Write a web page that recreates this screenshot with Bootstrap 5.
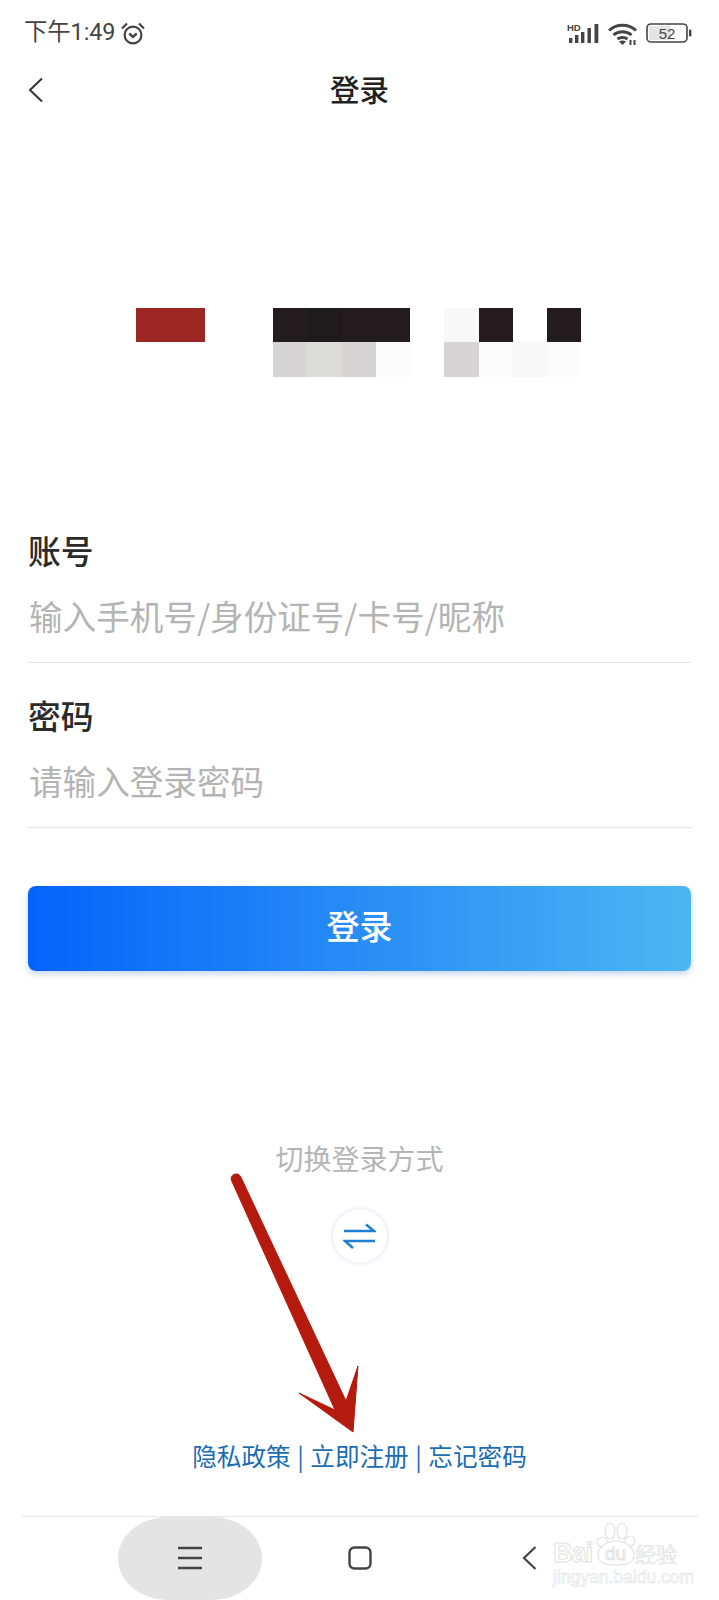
<!DOCTYPE html>
<html lang="zh-CN">
  <head>
    <meta charset="UTF-8" />
    <meta name="viewport" content="width=device-width, initial-scale=1" />
    <title>登录</title>
    <link
      href="https://cdn.jsdelivr.net/npm/bootstrap@5.3.2/dist/css/bootstrap.min.css"
      rel="stylesheet"
    />
    <style>
      body {
        font-family: "Noto Sans CJK SC", "Noto Sans", sans-serif;
        background: #fff;
      }
      .phone {
        width: 719px;
        height: 1600px;
        overflow: hidden;
        position: relative;
      }
      .status-row {
        height: 64px;
        padding: 2px 27px 0 24px;
        color: #444;
      }
      .status-time {
        font-family: Roboto, "Noto Sans CJK SC", sans-serif;
        font-size: 23.4px;
        line-height: 1;
        letter-spacing: -0.1px;
      }
      .status-left {
        gap: 6px;
      }
      .status-right {
        gap: 9px;
      }
      .title-row {
        height: 50px;
        position: relative;
      }
      .title-text {
        font-size: 29.5px;
        font-weight: 500;
        color: #222;
        line-height: 50px;
        position: relative;
        top: -1px;
      }
      .back-icon {
        position: absolute;
        left: 28px;
        top: 13px;
      }
      .logo-grid {
        display: grid;
        grid-template-columns: repeat(13, 34.25px);
        grid-auto-rows: 34.25px;
        margin: 194px 0 0 136px;
        width: max-content;
      }
      .px-red { background: #9c2722; }
      .px-black { background: #241b1e; }
      .px-black2 { background: #1d1b1b; }
      .px-dark { background: #261a1e; }
      .px-grey { background: #d6d4d5; }
      .px-grey2 { background: #dcdcdb; }
      .px-pale { background: #f9f8f9; }
      .px-faint { background: #fdfcfd; }
      .form-area {
        margin: 153px 28px 0;
      }
      .field-label {
        font-size: 32.8px;
        font-weight: 500;
        line-height: 44px;
        color: #2b2b2b;
        margin: 0;
        display: block;
        position: relative;
        top: -2px;
      }
      .field-input {
        height: 89px;
        font-size: 33.6px;
        padding: 0 0 4px 1px;
        border-width: 0 0 1px;
        border-color: #e2e2e2;
        border-radius: 0;
        color: #333;
      }
      .field-input::placeholder {
        color: #b4b4b4;
      }
      .login-btn {
        display: block;
        height: 85px;
        margin-top: 58px;
        padding: 0 0 4px;
        font-size: 33px;
        font-weight: 500;
        color: #fff;
        border: 0;
        border-radius: 8px;
        background: linear-gradient(90deg, #0563fa, #4cb6f1);
        box-shadow: 0 3px 6px rgba(60, 120, 200, 0.3);
      }
      .switch-text {
        margin-top: 167px;
        font-size: 28px;
        line-height: 40px;
        color: #b5b5b5;
      }
      .switch-btn {
        width: 54px;
        height: 54px;
        margin-top: 31px;
        border-radius: 50%;
        background: #fff;
        box-shadow: 0 0 4px rgba(120, 170, 225, 0.4);
      }
      .foot-links {
        margin-top: 175px;
        font-size: 24.6px;
        line-height: 36px;
        word-spacing: 1px;
        color: #1b6cb4;
        position: relative;
        top: -1px;
      }
      .foot-links a {
        color: inherit;
        text-decoration: none;
      }
      .bottom-nav {
        height: 84px;
        margin: 42px 21px 0;
        border-top: 1px solid #e6e6e6;
      }
      .nav-cell {
        width: 170px;
        height: 100%;
      }
      .nav-pill-bg {
        width: 144px;
        height: 100%;
        background: #e4e4e4;
        border-radius: 50px / 42px;
      }
      .red-arrow {
        position: absolute;
        left: 225px;
        top: 1165px;
      }
      .watermark {
        position: absolute;
        left: 553px;
        top: 1522px;
        width: 130px;
        color: #fff;
        -webkit-text-stroke: 1px #e2e2e2;
        font-family: "Liberation Sans", "Noto Sans CJK SC", sans-serif;
        line-height: 1;
      }
      .wm-logo {
        margin-top: 20px;
        height: 22px;
        white-space: nowrap;
      }
      .wm-bai {
        font-size: 27px;
        font-weight: 700;
        letter-spacing: -1px;
        width: 43px;
      }
      .wm-du {
        font-size: 19px;
        width: 39px;
        text-align: center;
        position: relative;
      }
      .wm-cn {
        font-family: "Noto Sans CJK SC", sans-serif;
        font-size: 21px;
        -webkit-text-stroke: 0.7px #e0e0e0;
      }
      .wm-url {
        font-size: 17.5px;
        margin-top: 5px;
        -webkit-text-stroke: 0.6px #e2e2e2;
        white-space: nowrap;
      }
      .wm-paw {
        position: absolute;
        left: 43px;
        top: 0;
      }
    </style>
  </head>
  <body>
    <div class="phone">
      <!-- status bar -->
      <div class="status-row d-flex justify-content-between align-items-center">
        <div class="status-left d-flex align-items-center">
          <span class="status-time">下午1:49</span>
          <svg width="24" height="23" viewBox="0 0 24 23" fill="none" stroke="#444" stroke-width="2.200">
            <circle cx="12" cy="13" r="8.400" />
            <path d="M8.200 11.500l3.800 3.400 3.800-3.400" stroke-width="2.400" />
            <path d="M1 6.500L6 1.500M23 6.500L18 1.500" stroke-width="2.200" />
          </svg>
        </div>
        <div class="status-right d-flex align-items-center">
          <svg width="32" height="21" viewBox="0 0 32 21">
            <text x="0" y="8" font-family="Liberation Sans" font-size="9.500" font-weight="700" fill="#444">HD</text>
            <g fill="#444">
              <rect x="2" y="15" width="3.400" height="5" />
              <rect x="8" y="12" width="3.400" height="8" />
              <rect x="14" y="9" width="3.400" height="11" />
              <rect x="20.500" y="5" width="3.400" height="15" />
              <rect x="27.500" y="1" width="3.800" height="19" />
            </g>
          </svg>
          <svg width="29" height="23" viewBox="0 0 29 23" fill="none" stroke="#444" stroke-width="3">
            <path d="M1 8.500C8 1.500 21 1.500 28 8.500" />
            <path d="M5.500 13c5-4.500 13-4.500 18 0" />
            <path d="M9.500 17c2.700-2 7.300-2 10 0" />
            <path d="M14.500 23l-3.500-3.500c2-1.300 5-1.300 7 0z" fill="#444" stroke="none" />
            <path d="M22.500 18v5M26.500 18v5" stroke-width="2" />
          </svg>
          <svg width="46" height="20" viewBox="0 0 46 20">
            <rect x="1" y="1" width="40" height="18" rx="4" fill="#fff" stroke="#444" stroke-width="1.600" />
            <rect x="3" y="3" width="22" height="14" rx="1.500" fill="#e4e4e4" />
            <rect x="43" y="6.500" width="2.400" height="7" rx="1" fill="#444" />
            <text x="21" y="16" text-anchor="middle" font-family="Liberation Sans" font-size="15" fill="#444">52</text>
          </svg>
        </div>
      </div>

      <!-- title -->
      <div class="title-row text-center">
        <svg class="back-icon" width="16" height="26" viewBox="0 0 16 26" fill="none" stroke="#333" stroke-width="2">
          <path d="M14 1.500L2 13l12 11.500" />
        </svg>
        <span class="title-text">登录</span>
      </div>

      <!-- pixelated logo -->
      <div class="logo-grid">
        <div class="px-red"></div><div class="px-red"></div><div></div><div></div>
        <div class="px-black"></div><div class="px-black2"></div><div class="px-black"></div><div class="px-black"></div>
        <div></div>
        <div class="px-pale"></div><div class="px-dark"></div><div></div><div class="px-black"></div>
        <div></div><div></div><div></div><div></div>
        <div class="px-grey"></div><div class="px-grey2"></div><div class="px-grey"></div><div class="px-faint"></div>
        <div></div>
        <div class="px-grey"></div><div class="px-faint"></div><div class="px-pale"></div><div class="px-faint"></div>
      </div>

      <!-- form -->
      <form class="form-area" autocomplete="off">
        <label class="field-label" for="account">账号</label>
        <input id="account" class="form-control field-input shadow-none" type="text" placeholder="输入手机号/身份证号/卡号/昵称" />
        <label class="field-label mt-4 pt-2" for="pwd">密码</label>
        <input id="pwd" class="form-control field-input shadow-none" type="text" placeholder="请输入登录密码" />
        <button type="button" class="btn login-btn w-100">登录</button>
      </form>

      <div class="switch-text text-center">切换登录方式</div>
      <div class="switch-btn mx-auto d-flex align-items-center justify-content-center">
        <svg width="33" height="28" viewBox="0 0 33 28" fill="none" stroke="#1f7fd0" stroke-width="2.500">
          <path d="M1 9h30L23 2.500" />
          <path d="M32 19H2l8 7" />
        </svg>
      </div>

      <div class="foot-links text-center">
        <a href="#">隐私政策</a> | <a href="#">立即注册</a> | <a href="#">忘记密码</a>
      </div>

      <!-- android nav -->
      <div class="bottom-nav d-flex justify-content-center">
        <div class="nav-cell d-flex justify-content-center align-items-center">
          <div class="nav-pill-bg d-flex align-items-center justify-content-center">
            <svg width="24" height="24" viewBox="0 0 24 24" stroke="#444" stroke-width="2.500">
              <path d="M0 2h24M0 12h24M0 22h24" />
            </svg>
          </div>
        </div>
        <div class="nav-cell d-flex justify-content-center align-items-center">
          <svg width="24" height="24" viewBox="0 0 24 24" fill="none" stroke="#444" stroke-width="2.400">
            <rect x="1.500" y="1.500" width="21" height="21" rx="5" />
          </svg>
        </div>
        <div class="nav-cell d-flex justify-content-center align-items-center">
          <svg width="15" height="24" viewBox="0 0 15 24" fill="none" stroke="#444" stroke-width="2.200">
            <path d="M13.500 1L2 12l11.500 11" />
          </svg>
        </div>
      </div>

      <!-- annotation over the page -->
      <svg class="red-arrow" width="145" height="275" viewBox="225 1165 145 275">
        <path d="M231.500 1180.500a5 5 0 0 1 9-4.200L346 1401l12-35-5 66-54-39 36 17z" fill="#b51a0e" stroke="#b51a0e" stroke-width="1" stroke-linejoin="round" />
      </svg>

      <!-- watermark -->
      <div class="watermark">
        <svg class="wm-paw" width="40" height="44" viewBox="0 0 40 44" fill="#fff" stroke="#e2e2e2" stroke-width="1.200">
          <circle cx="6" cy="20" r="5" />
          <ellipse cx="14" cy="9" rx="5" ry="8" />
          <ellipse cx="26" cy="9" rx="5" ry="8" />
          <circle cx="34" cy="19" r="5" />
          <path d="M20 19c-9 0-18 6-18 14 0 8 7 10 18 10s18-2 18-10c0-8-9-14-18-14z" />
        </svg>
        <div class="wm-logo d-flex align-items-center">
          <span class="wm-bai">Bai</span>
          <span class="wm-du">du</span>
          <span class="wm-cn">经验</span>
        </div>
        <div class="wm-url">jingyan.baidu.com</div>
      </div>
    </div>
    <script src="https://cdn.jsdelivr.net/npm/bootstrap@5.3.2/dist/js/bootstrap.bundle.min.js"></script>
  </body>
</html>
